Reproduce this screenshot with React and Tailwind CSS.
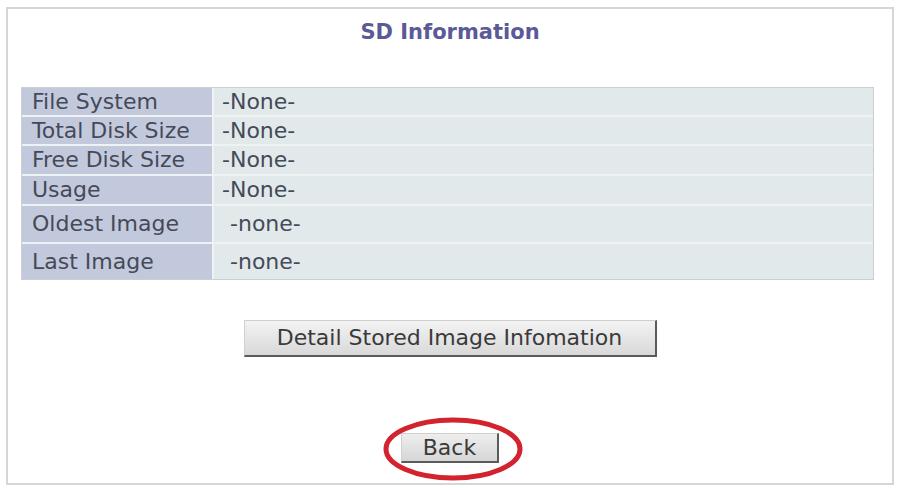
import React from 'react';

const rows = [
  { label: 'File System', value: '-None-', h: 'h-[27px]', pad: 'pl-[8px]' },
  { label: 'Total Disk Size', value: '-None-', h: 'h-[27px]', pad: 'pl-[8px]' },
  { label: 'Free Disk Size', value: '-None-', h: 'h-[28px]', pad: 'pl-[8px]' },
  { label: 'Usage', value: '-None-', h: 'h-[28px]', pad: 'pl-[8px]' },
  { label: 'Oldest Image', value: '-none-', h: 'h-[36px]', pad: 'pl-[16px]' },
  { label: 'Last Image', value: '-none-', h: 'h-[35px]', pad: 'pl-[16px]' },
];

export default function App() {
  return (
    <div className="w-[901px] h-[490px] bg-white pt-[7px] pl-[6px] font-['DejaVu_Sans',sans-serif]">
      <div className="w-[888px] h-[478px] border-2 border-[#d6d6d6] flex flex-col">
        <h1 className="mt-[11px] text-center text-[21px] leading-[24px] font-bold text-[#5b5a96]">
          SD Information
        </h1>

        {/* info table */}
        <div className="mt-[43px] ml-[13px] w-[853px] bg-[#eef2f3] border border-[#c9cfd2] grid grid-cols-[190px_1fr] gap-[2px]">
          {rows.map((r) => (
            <React.Fragment key={r.label}>
              <div className={`${r.h} bg-[#c3c9dd] pl-[10px] flex items-center text-[22px] leading-none text-[#454a58]`}>
                {r.label}
              </div>
              <div className={`${r.h} bg-[#e2e9eb] ${r.pad} flex items-center text-[22px] leading-none text-[#454a58]`}>
                {r.value}
              </div>
            </React.Fragment>
          ))}
        </div>

        <div className="mt-[40px] flex justify-center">
          <button className="w-[413px] h-[37px] bg-gradient-to-b from-[#f3f3f3] to-[#d9d9d9] border-t border-l border-[#d0d0d0] border-r-2 border-b-2 border-r-[#5a5a5a] border-b-[#5a5a5a] text-[22px] leading-none text-[#3a3a3a]">
            Detail Stored Image Infomation
          </button>
        </div>

        <div className="mt-[76px] flex justify-center">
          <div className="relative">
            <button className="w-[98px] h-[30px] bg-gradient-to-b from-[#eeeeee] to-[#d6d6d6] border-t border-l border-[#d0d0d0] border-r-2 border-b-2 border-r-[#5a5a5a] border-b-[#5a5a5a] text-[22px] leading-none text-[#3a3a3a]">
              Back
            </button>
            <svg className="absolute left-[-18px] top-[-16px] pointer-events-none" width="140" height="64" viewBox="0 0 140 64">
              <ellipse cx="70" cy="32" rx="67" ry="29" fill="none" stroke="#d3232f" strokeWidth="5" />
            </svg>
          </div>
        </div>
      </div>
    </div>
  );
}
